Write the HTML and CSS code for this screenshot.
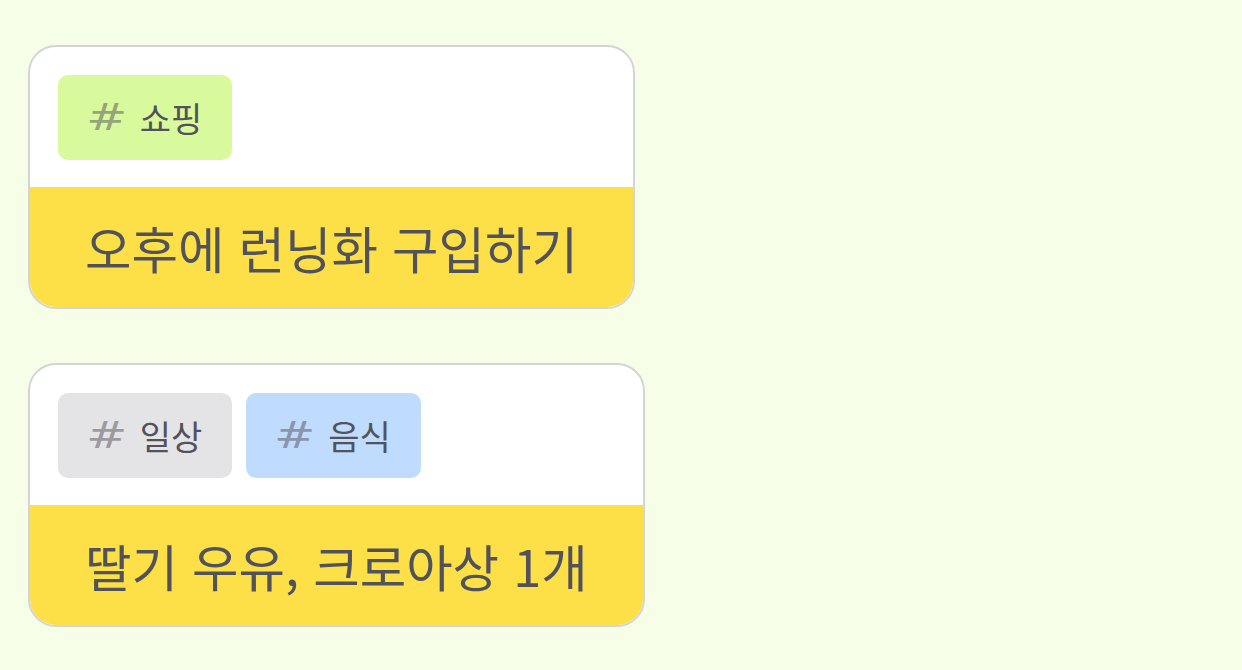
FILE: index.html
```html
<!DOCTYPE html>
<html lang="ko">
<head>
<meta charset="utf-8">
<link rel="stylesheet" href="styles.css">
</head>
<body>
<main class="list">
  <article class="card">
    <div class="tags">
      <span class="tag tag-lime"><span class="hash">#</span>쇼핑</span>
    </div>
    <div class="body">오후에 런닝화 구입하기</div>
  </article>
  <article class="card">
    <div class="tags">
      <span class="tag tag-gray"><span class="hash">#</span>일상</span>
      <span class="tag tag-blue"><span class="hash">#</span>음식</span>
    </div>
    <div class="body">딸기 우유, 크로아상 1개</div>
  </article>
</main>
</body>
</html>
```

FILE: styles.css
```css
html, body {
  margin: 0;
  padding: 0;
}
body {
  background: #f7fee7;
  font-family: "Noto Sans CJK KR", "Noto Sans", sans-serif;
  color: #52525b;
}
.list {
  display: flex;
  flex-direction: column;
  align-items: flex-start;
  gap: 54px;
  padding: 45px 28px;
}
.card {
  background: #ffffff;
  border: 2px solid #d4d4d8;
  border-radius: 28px;
  overflow: hidden;
}
.tags {
  display: flex;
  gap: 14px;
  padding: 28px 28px 27px;
}
.tag {
  display: flex;
  align-items: center;
  height: 85px;
  padding: 0 30px 0 28px;
  border-radius: 10px;
  font-size: 34px;
}
.hash {
  display: inline-block;
  font-family: "DejaVu Sans", sans-serif;
  font-size: 38px;
  line-height: 1;
  opacity: 0.5;
  transform: scaleX(1.3);
  transform-origin: left center;
  margin: 0 22px 2px 0;
}
.tag-lime { background: #d9f99d; }
.tag-gray { background: #e4e4e7; }
.tag-blue { background: #bfdbfe; }
.body {
  background: #fde047;
  font-size: 50.5px;
  line-height: 64px;
  padding: 28px 55px;
  white-space: nowrap;
}
```
